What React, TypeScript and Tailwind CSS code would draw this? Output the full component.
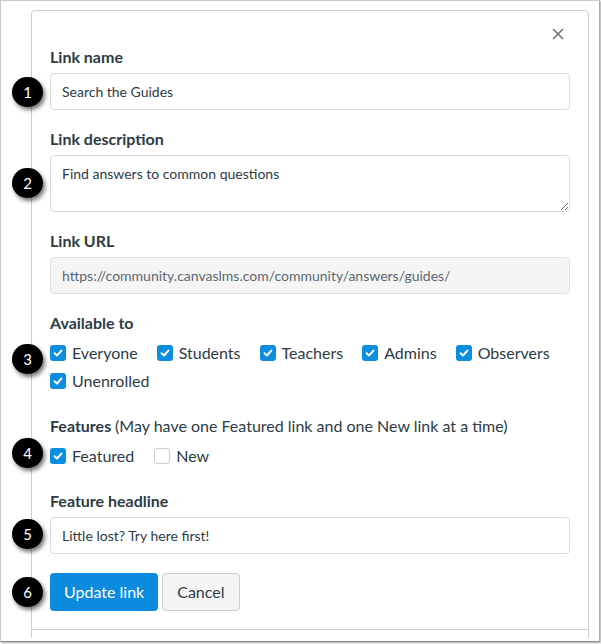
import React from 'react';

const font = { fontFamily: 'Lato, "Noto Sans", sans-serif' };

const Badge = ({ n, top }: { n: number; top: string }) => (
  <div
    className={`absolute left-[12px] ${top} w-[31px] h-[30px] rounded-full bg-black text-white text-[15px] flex items-center justify-center shadow-[2px_3px_4px_rgba(0,0,0,0.55)]`}
  >
    {n}
  </div>
);

const Check = ({ label, checked }: { label: string; checked: boolean }) => (
  <label className="flex items-center gap-[6px] h-[28px]">
    {checked ? (
      <span className="w-[16px] h-[16px] rounded-[3px] bg-[#0b8de0] flex items-center justify-center">
        <svg width="10" height="10" viewBox="0 0 10 10">
          <path d="M1.6 5.2 L4 7.5 L8.4 2.6" stroke="white" strokeWidth="2" fill="none" strokeLinecap="round" strokeLinejoin="round" />
        </svg>
      </span>
    ) : (
      <span className="w-[16px] h-[16px] rounded-[3px] bg-white border border-[#c7cdd1]" />
    )}
    <span className="text-[16px] text-[#2d3b45]">{label}</span>
  </label>
);

const Label = ({ children, className = '' }: { children: React.ReactNode; className?: string }) => (
  <div className={`text-[16px] leading-5 font-bold text-[#2d3b45] ${className}`}>{children}</div>
);

export default function App() {
  return (
    <div className="relative w-[601px] h-[644px] bg-white" style={font}>
      <div className="w-[600px] h-[642px] border border-[#c9c9c9] border-b-[#8a8a8a] border-r-[#a8a8a8] shadow-[1px_1px_2px_rgba(0,0,0,0.35)] overflow-hidden">
        <div className="ml-[30px] mt-[9px] w-[558px]">
          <div className="border border-[#c7cdd1] rounded-t-[4px] px-[18px] pb-[18px]">
            <div className="flex justify-end pt-[17px] pr-[6px]">
              <svg width="12" height="12" viewBox="0 0 12 12">
                <path d="M1 1 L11 11 M11 1 L1 11" stroke="#6b7780" strokeWidth="1.6" />
              </svg>
            </div>

            <Label className="mt-[7px]">Link name</Label>
            <div className="mt-[6px] h-[37px] border border-[#d7dbde] rounded-[4px] px-[11px] flex items-center text-[14px] text-[#2d3b45]">
              Search the Guides
            </div>

            <Label className="mt-[19px]">Link description</Label>
            <textarea
              readOnly
              defaultValue="Find answers to common questions"
              className="mt-[6px] block w-full h-[57px] border border-[#d7dbde] rounded-[4px] px-[11px] pt-[8px] text-[14px] leading-5 text-[#2d3b45] resize-y outline-none"
            />

            <Label className="mt-[19px]">Link URL</Label>
            <div className="mt-[6px] h-[37px] border border-[#e1e4e6] bg-[#f5f5f5] rounded-[4px] px-[11px] flex items-center text-[14px] text-[#5b6770]">
              https://community.canvaslms.com/community/answers/guides/
            </div>

            <Label className="mt-[19px]">Available to</Label>
            <div className="mt-[6px] flex flex-wrap gap-x-[19px]">
              <Check label="Everyone" checked />
              <Check label="Students" checked />
              <Check label="Teachers" checked />
              <Check label="Admins" checked />
              <Check label="Observers" checked />
              <Check label="Unenrolled" checked />
            </div>

            <Label className="mt-[21px]">
              Features <span className="font-normal">(May have one Featured link and one New link at a time)</span>
            </Label>
            <div className="mt-[6px] flex flex-wrap gap-x-[20px]">
              <Check label="Featured" checked />
              <Check label="New" checked={false} />
            </div>

            <Label className="mt-[21px]">Feature headline</Label>
            <div className="mt-[6px] h-[37px] border border-[#d7dbde] rounded-[4px] px-[11px] flex items-center text-[14px] text-[#2d3b45]">
              Little lost? Try here first!
            </div>

            <div className="mt-[19px] flex gap-[4px]">
              <button className="h-[38px] px-[14px] rounded-[4px] bg-[#0a8be0] text-white text-[16px]">Update link</button>
              <button className="h-[38px] px-[14px] rounded-[4px] bg-[#f5f5f5] border border-[#c7cdd1] text-[#2d3b45] text-[16px]">Cancel</button>
            </div>
          </div>
          <div className="h-[8px] border-x border-[#c7cdd1]" />
        </div>
      </div>

      <Badge n={1} top="top-[77px]" />
      <Badge n={2} top="top-[168px]" />
      <Badge n={3} top="top-[344px]" />
      <Badge n={4} top="top-[438px]" />
      <Badge n={5} top="top-[519px]" />
      <Badge n={6} top="top-[577px]" />
    </div>
  );
}
